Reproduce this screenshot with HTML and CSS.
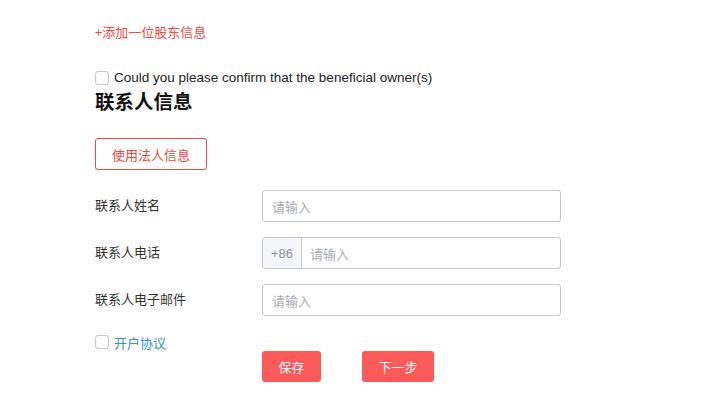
FILE: index.html
```html
<!DOCTYPE html>
<html lang="zh">
<head>
<meta charset="utf-8">
<link rel="stylesheet" href="styles.css">
</head>
<body>
<div class="page">
  <div class="add-link">+添加一位股东信息</div>
  <label class="check-row confirm">
    <span class="box"></span>
    <span class="check-text">Could you please confirm that the beneficial owner(s)</span>
  </label>
  <h2 class="title">联系人信息</h2>
  <button class="outline-btn">使用法人信息</button>
  <div class="form">
    <div class="row">
      <div class="label">联系人姓名</div>
      <div class="input"><span class="ph">请输入</span></div>
    </div>
    <div class="row">
      <div class="label">联系人电话</div>
      <div class="input group"><span class="prefix">+86</span><span class="ph">请输入</span></div>
    </div>
    <div class="row">
      <div class="label">联系人电子邮件</div>
      <div class="input"><span class="ph">请输入</span></div>
    </div>
  </div>
  <label class="check-row agree">
    <span class="box"></span>
    <span class="agree-text">开户协议</span>
  </label>
  <div class="actions">
    <button class="solid-btn save">保存</button>
    <button class="solid-btn next">下一步</button>
  </div>
</div>
</body>
</html>
```

FILE: styles.css
```css
* { box-sizing: border-box; }
html, body { margin: 0; padding: 0; background: #fff; }
body {
  font-family: "Noto Sans CJK SC", "Liberation Sans", sans-serif;
  color: #333;
  font-size: 13px;
}
.page {
  padding: 22px 0 0 95px;
}
.add-link {
  color: #f5483f;
  font-size: 13px;
  line-height: 20px;
  height: 20px;
}
.check-row {
  display: flex;
  align-items: center;
  gap: 5px;
}
.confirm {
  margin-top: 26px;
  height: 20px;
}
.box {
  width: 14px;
  height: 14px;
  border: 1px solid #c4c7cd;
  border-radius: 3px;
  background: #fff;
  flex: none;
}
.check-text {
  font-family: "Liberation Sans", "Noto Sans CJK SC", sans-serif;
  font-size: 13.5px;
  color: #222;
  line-height: 20px;
}
.title {
  margin: 1px 0 0;
  font-size: 19.5px;
  line-height: 24px;
  font-weight: 700;
  color: #111;
}
.outline-btn {
  margin-top: 25px;
  width: 112px;
  height: 32px;
  border: 1px solid #f0483e;
  border-radius: 3px;
  background: #fff;
  color: #f0483e;
  font-family: inherit;
  font-size: 13px;
  padding: 0;
  display: block;
}
.form {
  margin-top: 20px;
  display: flex;
  flex-direction: column;
  gap: 15px;
}
.row {
  display: flex;
  align-items: center;
  height: 32px;
}
.label {
  width: 167px;
  flex: none;
  color: #333;
  font-size: 13px;
  line-height: 18px;
  margin-top: -3px;
}
.input {
  width: 299px;
  height: 32px;
  border: 1px solid #c3c6cf;
  border-radius: 3px;
  display: flex;
  align-items: center;
  padding-left: 9px;
  overflow: hidden;
}
.input.group { padding-left: 0; }
.prefix {
  width: 39px;
  height: 100%;
  background: #f4f6fa;
  border-right: 1px solid #c3c6cf;
  color: #8c8f96;
  font-family: "Liberation Sans", sans-serif;
  font-size: 13px;
  display: flex;
  align-items: center;
  justify-content: center;
  margin-right: 8px;
}
.ph {
  color: #a9acb2;
  font-size: 13px;
}
.agree {
  margin-top: 17px;
  height: 18px;
}
.agree-text {
  color: #3593c7;
  font-size: 13px;
}
.actions {
  margin-left: 167px;
  display: flex;
  gap: 41px;
}
.solid-btn {
  height: 31px;
  border: none;
  border-radius: 3px;
  background: #fb5a59;
  color: #fff;
  font-family: inherit;
  font-size: 13px;
  padding: 0;
}
.save { width: 59px; }
.next { width: 72px; }
```
